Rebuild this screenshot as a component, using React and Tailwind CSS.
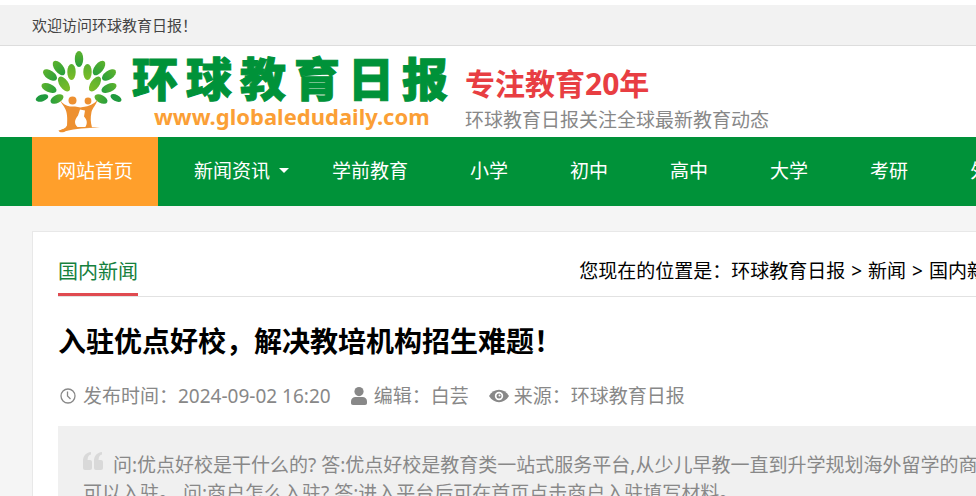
const navItems = ['学前教育', '小学', '初中', '高中', '大学', '考研', '外语'];

// x, y, rotation, half width, half height, fill
const leaves = [
  [79, 59, 0, 4.2, 8, 'a'],
  [59, 68, -38, 4.4, 8.5, 'a'],
  [99, 68, 38, 4.4, 8.5, 'a'],
  [71.5, 72, 0, 4.2, 8, 'b'],
  [87.500, 72, 0, 4.2, 8, 'b'],
  [50, 75, -55, 4.4, 8, 'a'],
  [109, 75, 55, 4.4, 8, 'a'],
  [64, 84, -35, 4.4, 8.5, 'b'],
  [95, 84, 35, 4.4, 8.5, 'b'],
  [49, 88, -67, 4.2, 8, 'a'],
  [109, 88, 67, 4.2, 8, 'a'],
  [42, 98, 72, 3.4, 6.5, 'c'],
  [116, 98, -62, 3.2, 6, 'c'],
  [57, 99, 63, 4, 7, 'a'],
  [101, 99, -63, 4, 7, 'a'],
];
const leafFill = { a: 'url(#leafDeep)', b: 'url(#leafLight)', c: '#1f9a3e' };

function TreeLogo() {
  return (
    <svg viewBox="32 46 96 91" className="h-[91px] w-24 shrink-0" aria-hidden="true">
      <defs>
        <linearGradient id="leafDeep" x1="0" y1="0" x2="0" y2="1">
          <stop offset="0" stopColor="#5db22d" />
          <stop offset="1" stopColor="#279f3c" />
        </linearGradient>
        <linearGradient id="leafLight" x1="0" y1="0" x2="0" y2="1">
          <stop offset="0" stopColor="#58b030" />
          <stop offset="1" stopColor="#7dbd27" />
        </linearGradient>
      </defs>
      {leaves.map(([x, y, r, rx, ry, f]) => (
        <ellipse key={`${x}-${y}`} cx={x} cy={y} rx={rx} ry={ry} fill={leafFill[f]} transform={`rotate(${r} ${x} ${y})`} />
      ))}
      <g fill="#ed9030">
        <circle cx="72.500" cy="100.500" r="4" />
        <circle cx="88" cy="101" r="3.400" />
        <path d="M60 100c3 4 6 6 10 6.500h5c3 .5 5 1.500 8 .5 6-.5 11-3 14.500-7-1.500 5-5 8-6 12-1.200 6-1 10 .5 15.500h-7c3-4 2-8-1-11l1-6-5-1-2 6c-3 4-5 8 .5 12.500-5 0-9 1-14.500 4-2 .8-5 .3-5.500-1.500 4-1 7-2 8.500-5 .5-7 .3-13-2-17-1-3-4-5-5-9z" />
        <path d="M61 130c7-3 20-4 39-2-16-.3-26 .5-38 4z" />
      </g>
    </svg>
  );
}

function ClockIcon() {
  return (
    <svg viewBox="0 0 16 16" className="size-4" fill="none" stroke="#888" strokeWidth="1.300" aria-hidden="true">
      <circle cx="8" cy="8" r="7" />
      <path d="M7.500 3.500V8l3 3" />
    </svg>
  );
}

function UserIcon() {
  return (
    <svg viewBox="0 0 16 18" className="h-[18px] w-4" fill="#888" aria-hidden="true">
      <circle cx="8" cy="4.600" r="4.600" />
      <path d="M0 16v-1.500C0 11.500 2 10 4.500 10h7c2.500 0 4.500 1.500 4.500 4.500V16c0 1.300-.7 2-2 2H2c-1.300 0-2-.7-2-2z" />
    </svg>
  );
}

function EyeIcon() {
  return (
    <svg viewBox="0 0 20 14" className="h-[14px] w-5" aria-hidden="true">
      <path d="M0 7C2.500 3 6 .8 10 .8S17.500 3 20 7c-2.500 4-6 6.200-10 6.200S2.500 11 0 7z" fill="#888" />
      <circle cx="10" cy="7" r="4.200" fill="#fff" />
      <circle cx="10" cy="7" r="2.500" fill="#888" />
      <circle cx="10.500" cy="6.500" r="1" fill="#fff" />
    </svg>
  );
}

function QuoteIcon() {
  return (
    <svg viewBox="0 0 20 18" className="mr-[10px] inline-block h-[18px] w-5 align-[2px]" fill="#d9d9d9" aria-hidden="true">
      <path d="M8 0v2.500C5.800 3 4.600 4.700 4.600 8H7c1.200 0 2 .8 2 2v6c0 1.200-.8 2-2 2H2c-1.200 0-2-.8-2-2V9C0 4 3 .5 8 0z" />
      <path d="M19 0v2.500c-2.200.5-3.400 2.200-3.400 5.500H18c1.200 0 2 .8 2 2v6c0 1.200-.8 2-2 2h-5c-1.200 0-2-.8-2-2V9c0-5 3-8.500 8-9z" />
    </svg>
  );
}

export default function App() {
  return (
    <div className="min-h-screen overflow-hidden whitespace-nowrap bg-[#f5f5f5] pt-[5px] font-['Noto_Sans','Noto_Sans_CJK_SC',sans-serif] text-[19px] leading-7 font-normal shadow-[inset_0_5px_0_#fff]">
      <div className="border-b border-[#dddddd] bg-[#f2f2f2] px-8">
        <p className="text-[15px] leading-10 text-[#444]">欢迎访问环球教育日报！</p>
      </div>

      <header className="flex bg-white pl-8">
        <a href="#home" className="flex">
          <TreeLogo />
          <div className="w-[337px] pt-2 pl-1">
            <div className="flex gap-2 text-[46px] leading-[48px] font-black text-[#009239] [-webkit-text-stroke:1px_#009239]">
              {[...'环球教育日报'].map((c) => (
                <span key={c}>{c}</span>
              ))}
            </div>
            <div className="pl-[22px] text-[22px] leading-7 font-bold text-[#fb9f36]">www.globaledudaily.com</div>
          </div>
        </a>
        <div className="pt-[18px]">
          <p className="text-[30px] leading-10 font-bold text-[#e83e42]">专注教育20年</p>
          <p className="leading-8 text-[#888]">环球教育日报关注全球最新教育动态</p>
        </div>
      </header>

      <nav className="flex bg-[#009239] pl-8 leading-[69px] text-white">
        <a href="#home" className="mr-[5px] bg-[#ff9f2b] px-[25px]">网站首页</a>
        <a href="#news" className="relative px-[31px]">
          新闻资讯
          <span className="absolute top-[31px] right-3 border-x-5 border-t-5 border-x-transparent border-t-white" />
        </a>
        {navItems.map((item) => (
          <a key={item} href={`#${item}`} className="px-[31px]">{item}</a>
        ))}
      </nav>

      <main className="mt-[25px] ml-8 min-w-[999px] border border-[#e8e8e8] bg-white px-[25px] pt-5">
        <div className="flex justify-between border-b border-[#e2e2e2]">
          <h2 className="border-b-3 border-[#e04a50] pb-px text-[20px] leading-10 text-[#15803d]">国内新闻</h2>
          <div className="flex gap-[6px] leading-[38px] text-black">
            <span>您现在的位置是：<a href="#home">环球教育日报</a></span>
            <span>&gt;</span>
            <a href="#news">新闻</a>
            <span>&gt;</span>
            <a href="#domestic">国内新闻</a>
          </div>
        </div>

        <h1 className="pt-6 text-[28px] leading-10 font-bold text-black">入驻优点好校，解决教培机构招生难题！</h1>

        <div className="flex gap-5 pt-[21px] pl-[2px] text-[#888]">
          <span className="flex items-center gap-[7px]"><ClockIcon />发布时间：2024-09-02 16:20</span>
          <span className="flex items-center gap-[7px]"><UserIcon />编辑：白芸</span>
          <span className="flex items-center gap-[5px]"><EyeIcon />来源：环球教育日报</span>
        </div>

        <blockquote className="mt-4 bg-[#f0f0f0] px-[25px] py-[25px] text-[#888]">
          <QuoteIcon />问:优点好校是干什么的? 答:优点好校是教育类一站式服务平台,从少儿早教一直到升学规划海外留学的商户
          <br />
          可以入驻。 问:商户怎么入驻? 答:进入平台后可在首页点击商户入驻填写材料。
        </blockquote>
      </main>
    </div>
  );
}
